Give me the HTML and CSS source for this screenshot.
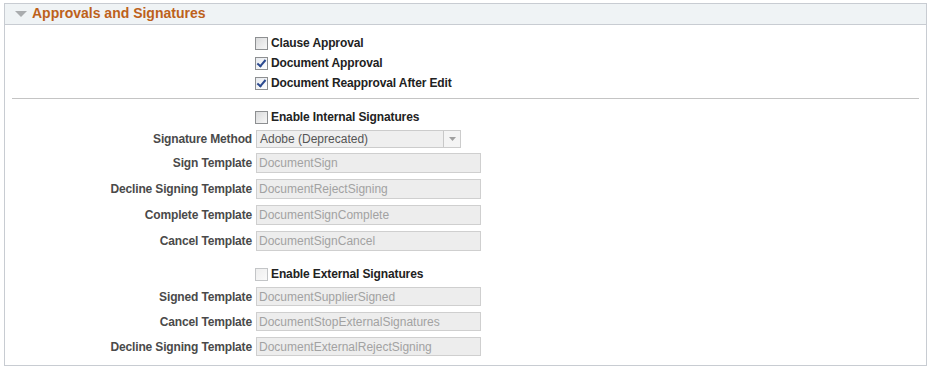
FILE: index.html
```html
<!DOCTYPE html>
<html lang="en">
<head>
  <meta charset="UTF-8" />
  <title>Approvals and Signatures</title>
  <link rel="stylesheet" href="styles.css">
</head>
<body>
  <div class="group-box">
    <!-- Collapsible header -->
    <div class="group-header">
      <span class="toggle"></span>
      <h2>Approvals and Signatures</h2>
    </div>

    <div class="group-body">
      <!-- Approvals -->
      <div class="form-grid checks">
        <span></span>
        <label class="check"><input type="checkbox"> Clause Approval</label>
        <span></span>
        <label class="check"><input type="checkbox" checked> Document Approval</label>
        <span></span>
        <label class="check"><input type="checkbox" checked> Document Reapproval After Edit</label>
      </div>

      <hr class="divider">

      <!-- Internal signatures -->
      <div class="form-grid internal">
        <span></span>
        <label class="check"><input type="checkbox"> Enable Internal Signatures</label>

        <label class="field-label">Signature Method</label>
        <div class="select">
          <span>Adobe (Deprecated)</span>
          <span class="select-btn"><svg width="7" height="4" viewBox="0 0 7 4"><path d="M0 0h7L3.5 4z" fill="#a0a0a0"/></svg></span>
        </div>

        <label class="field-label">Sign Template</label>
        <input class="text" type="text" value="DocumentSign" disabled>

        <label class="field-label">Decline Signing Template</label>
        <input class="text" type="text" value="DocumentRejectSigning" disabled>

        <label class="field-label">Complete Template</label>
        <input class="text" type="text" value="DocumentSignComplete" disabled>

        <label class="field-label">Cancel Template</label>
        <input class="text" type="text" value="DocumentSignCancel" disabled>
      </div>

      <!-- External signatures -->
      <div class="form-grid external">
        <span></span>
        <label class="check disabled"><input type="checkbox" disabled> Enable External Signatures</label>

        <label class="field-label">Signed Template</label>
        <input class="text" type="text" value="DocumentSupplierSigned" disabled>

        <label class="field-label">Cancel Template</label>
        <input class="text" type="text" value="DocumentStopExternalSignatures" disabled>

        <label class="field-label">Decline Signing Template</label>
        <input class="text" type="text" value="DocumentExternalRejectSigning" disabled>
      </div>
    </div>
  </div>
</body>
</html>
```

FILE: styles.css
```css
body {
  margin: 3px 5px 0 4px;
  font-family: "Liberation Sans", Arial, sans-serif;
  font-size: 12px;
  color: #333;
  background: #fff;
}

/* Group box */
.group-box {
  border: 1px solid #c8ccd2;
  border-top: none;
  height: 363px;
  box-sizing: border-box;
}

.group-header {
  display: flex;
  align-items: center;
  height: 22px;
  box-sizing: border-box;
  background: #eff3f5;
  border: 1px solid #c8ccd2;
  margin: 0 -1px;
  padding: 0 0 2px 10px;
}
.group-header h2 {
  margin: 0;
  font-size: 14px;
  font-weight: bold;
  color: #bd611b;
}
.toggle {
  width: 0;
  height: 0;
  border-left: 6px solid transparent;
  border-right: 6px solid transparent;
  border-top: 6px solid #a9acae;
  margin-right: 5px;
  margin-top: 1px;
}

.group-body {
  padding-top: 8px;
}

/* Label / field grid */
.form-grid {
  display: grid;
  grid-template-columns: 247px 1fr;
  column-gap: 4px;
  align-items: center;
}
.form-grid.checks {
  grid-auto-rows: 20px;
}
.form-grid.external {
  margin-top: 10px;
}

.divider {
  border: none;
  border-top: 1px solid #c4c4c4;
  margin: 5px 7px 8px 7px;
}

/* Checkbox rows */
.check {
  display: flex;
  align-items: center;
  height: 20px;
  font-weight: bold;
  color: #222;
  letter-spacing: -0.12px;
}
.check input {
  appearance: none;
  position: relative;
  width: 13px;
  height: 13px;
  margin: 0 3px 0 -1px;
  border: 1px solid #8d8f91;
  background: linear-gradient(135deg, #d9dadb, #f7f7f7);
}
.check input:checked {
  background: linear-gradient(135deg, #e6e9ee, #ffffff);
}
.check input:checked::after {
  content: "";
  position: absolute;
  left: 3px;
  top: 0px;
  width: 3px;
  height: 7px;
  border: solid #2c4a8f;
  border-width: 0 2px 2px 0;
  transform: rotate(40deg);
}
.check.disabled input {
  border-color: #c3c5c7;
  background: linear-gradient(135deg, #eeeeee, #fafafa);
}

.field-label {
  text-align: right;
  font-weight: bold;
  color: #4a4a4a;
  letter-spacing: -0.15px;
}

/* Disabled select */
.select {
  display: flex;
  align-items: center;
  justify-content: space-between;
  width: 205px;
  height: 18px;
  box-sizing: border-box;
  border: 1px solid #cccccc;
  background: #efefef;
  color: #555;
  padding-left: 3px;
  margin: 3px 0 2px;
}
.select-btn {
  display: flex;
  align-items: center;
  justify-content: center;
  width: 16px;
  height: 16px;
  border-left: 1px solid #c8c8c8;
  background: #f4f4f4;
}

/* Disabled text fields */
.text {
  width: 225px;
  height: 20px;
  box-sizing: border-box;
  border: 1px solid #cfcfcf;
  background: #ededed;
  color: #a2a2a2;
  font-family: "Liberation Sans", Arial, sans-serif;
  font-size: 12px;
  padding: 0 2px;
  margin: 3px 0;
}
.external .text {
  height: 19px;
}
```
